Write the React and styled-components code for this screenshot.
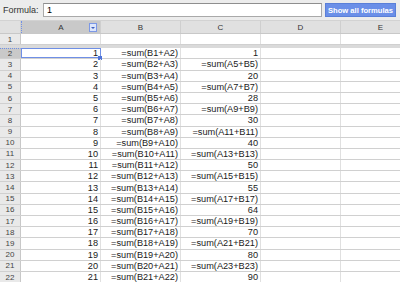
import React from 'react';
import styled, { createGlobalStyle } from 'styled-components';

const GlobalStyle = createGlobalStyle`
  html, body { margin: 0; padding: 0; background: #fff; }
  body { font-family: "Liberation Sans", Arial, sans-serif; overflow: hidden; }
`;

const COLS = '21px 80px 80px 80px 80px 80px';
const ROW_H = 11.2;

const Page = styled.div`
  width: 400px;
  height: 282px;
  overflow: hidden;
`;

const FormulaBar = styled.div`
  height: 20px;
  background: #ececec;
  display: flex;
  align-items: center;
  padding: 0 4px 0 3px;
  box-sizing: border-box;
  gap: 3px;
`;

const Label = styled.span`
  font-size: 9px;
  color: #333;
  width: 37px;
`;

const Input = styled.div`
  flex: 1;
  height: 14px;
  background: #fff;
  border: 1px solid #a9a9a9;
  border-top-color: #8e8e8e;
  box-sizing: border-box;
  font-size: 9px;
  color: #000;
  display: flex;
  align-items: center;
  padding-left: 3px;
`;

const Button = styled.div`
  height: 14px;
  padding: 0 2px;
  background: #6b8fe8;
  border: 1px solid #5a7fd8;
  box-sizing: border-box;
  color: #fff;
  font-weight: bold;
  font-size: 7.6px;
  display: flex;
  align-items: center;
  white-space: nowrap;
`;

const Grid = styled.div`
  width: 421px;
`;

const HeaderRow = styled.div`
  display: grid;
  grid-template-columns: ${COLS};
  height: 14px;
  background: #e0e0e0;
  border-top: 1px solid #d2d2d2;
  border-bottom: 1px solid #c8c8c8;
  box-sizing: border-box;
`;

const ColHead = styled.div`
  position: relative;
  display: flex;
  align-items: center;
  justify-content: center;
  font-size: 8px;
  color: #333;
  border-right: 1px solid #cfcfcf;
  background: ${p => (p.$active ? '#c9c9c9' : '#e0e0e0')};
  border-left: ${p => (p.$active ? '1px dotted #6f8fe6' : 'none')};
`;

const Drop = styled.div`
  position: absolute;
  right: 3px;
  top: 2px;
  width: 6px;
  height: 7px;
  background: #dde6fb;
  border: 1px solid #7c98e6;
  display: flex;
  align-items: center;
  justify-content: center;
  &::after {
    content: '';
    border-left: 2px solid transparent;
    border-right: 2px solid transparent;
    border-top: 2px solid #3e5fc0;
  }
`;

const Row = styled.div`
  display: grid;
  grid-template-columns: ${COLS};
  height: ${ROW_H}px;
  box-sizing: border-box;
  border-bottom: 1px solid #d0d0d0;
`;

const Frozen = styled.div`
  height: 3px;
  background: #dadada;
`;

const RowHead = styled.div`
  background: ${p => (p.$active ? '#c9c9c9' : '#e9e9e9')};
  border-right: 1px solid #c8c8c8;
  border-top: ${p => (p.$active ? '1px dotted #6f8fe6' : 'none')};
  color: #444;
  font-size: 8px;
  display: flex;
  align-items: center;
  justify-content: center;
`;

const Cell = styled.div`
  position: relative;
  border-right: 1px solid #e0e0e0;
  font-size: 9.2px;
  color: #1a1a1a;
  display: flex;
  align-items: center;
  justify-content: flex-end;
  padding-right: 2px;
  white-space: nowrap;
  overflow: visible;
  box-sizing: border-box;
  outline: ${p => (p.$selected ? '1px solid #6f8fe6' : 'none')};
  outline-offset: -1px;
`;

const Handle = styled.div`
  position: absolute;
  right: -2px;
  bottom: -2px;
  width: 4px;
  height: 4px;
  background: #4f74d8;
`;

const cValue = n => (n % 2 === 0
  ? { 2: '1', 4: '20', 6: '28', 8: '30', 10: '40', 12: '50', 14: '55', 16: '64', 18: '70', 20: '80', 22: '90' }[n]
  : `=sum(A${n + 2}+B${n + 2})`);

const rows = Array.from({ length: 21 }, (_, i) => i + 2);

export default function App() {
  return (
    <Page>
      <GlobalStyle />
      <FormulaBar>
        <Label>Formula:</Label>
        <Input>1</Input>
        <Button>Show all formulas</Button>
      </FormulaBar>
      <Grid>
        <HeaderRow>
          <ColHead />
          <ColHead $active>A<Drop /></ColHead>
          <ColHead>B</ColHead>
          <ColHead>C</ColHead>
          <ColHead>D</ColHead>
          <ColHead>E</ColHead>
        </HeaderRow>
        <Row>
          <RowHead>1</RowHead>
          <Cell /><Cell /><Cell /><Cell /><Cell />
        </Row>
        <Frozen />
        {rows.map(n => (
          <Row key={n}>
            <RowHead $active={n === 2}>{n}</RowHead>
            <Cell $selected={n === 2}>
              {n - 1}
              {n === 2 && <Handle />}
            </Cell>
            <Cell>{`=sum(B${n - 1}+A${n})`}</Cell>
            <Cell>{cValue(n)}</Cell>
            <Cell />
            <Cell />
          </Row>
        ))}
      </Grid>
    </Page>
  );
}
